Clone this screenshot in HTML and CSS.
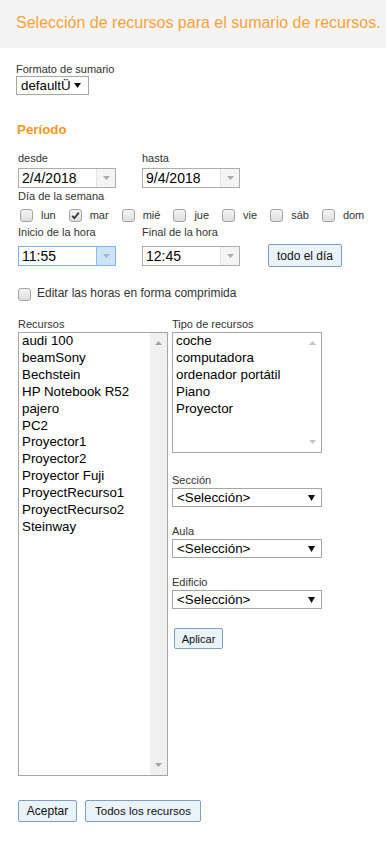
FILE: index.html
```html
<!DOCTYPE html>
<html lang="es">
<head>
<meta charset="utf-8">
<title>Selección de recursos</title>
<link rel="stylesheet" href="styles.css">
</head>
<body>
<header class="hdr">
  <h1 class="hdr-title">Selección de recursos para el sumario de recursos.</h1>
</header>
<main class="page">
  <div class="fmt">
    <div class="lbl">Formato de sumario</div>
    <div class="select select-fmt"><span class="sel-text">defaultÜ</span><svg class="caret" width="7" height="5" viewBox="0 0 7 5"><polygon points="0,0 7,0 3.5,5" fill="#111"/></svg></div>
  </div>

  <h2 class="section">Período</h2>

  <div class="content">
    <div class="pair-grid dates">
      <div class="lbl">desde</div>
      <div class="lbl">hasta</div>
      <div></div>
      <div class="combo"><span class="combo-val">2/4/2018</span><span class="combo-btn"><svg width="7" height="4" viewBox="0 0 7 4"><polygon points="0,0 7,0 3.5,4" fill="#a5adbd"/></svg></span></div>
      <div class="combo"><span class="combo-val">9/4/2018</span><span class="combo-btn"><svg width="7" height="4" viewBox="0 0 7 4"><polygon points="0,0 7,0 3.5,4" fill="#a5adbd"/></svg></span></div>
      <div></div>
    </div>

    <div class="lbl days-lbl">Día de la semana</div>
    <div class="days">
      <div class="day"><span class="cb"></span><span class="day-name">lun</span></div>
      <div class="day"><span class="cb"><svg width="11" height="11" viewBox="0 0 11 11"><path d="M2.2 5.8 L4.4 8.2 L8.8 2.6" fill="none" stroke="#333" stroke-width="1.8"/></svg></span><span class="day-name">mar</span></div>
      <div class="day"><span class="cb"></span><span class="day-name">mié</span></div>
      <div class="day"><span class="cb"></span><span class="day-name">jue</span></div>
      <div class="day"><span class="cb"></span><span class="day-name">vie</span></div>
      <div class="day"><span class="cb"></span><span class="day-name">sáb</span></div>
      <div class="day"><span class="cb"></span><span class="day-name">dom</span></div>
    </div>

    <div class="pair-grid times">
      <div class="lbl">Inicio de la hora</div>
      <div class="lbl">Final de la hora</div>
      <div></div>
      <div class="combo combo-active"><span class="combo-val">11:55</span><span class="combo-btn"><svg width="7" height="4" viewBox="0 0 7 4"><polygon points="0,0 7,0 3.5,4" fill="#a5b6c8"/></svg></span></div>
      <div class="combo"><span class="combo-val">12:45</span><span class="combo-btn"><svg width="7" height="4" viewBox="0 0 7 4"><polygon points="0,0 7,0 3.5,4" fill="#a5adbd"/></svg></span></div>
      <button class="btn btn-day" type="button">todo el día</button>
    </div>

    <div class="compact">
      <span class="cb"></span>
      <span class="compact-text">Editar las horas en forma comprimida</span>
    </div>

    <div class="lists">
      <div class="col">
        <div class="lbl">Recursos</div>
        <div class="listbox listbox-main">
          <div class="opts">
            <div class="opt">audi 100</div>
            <div class="opt">beamSony</div>
            <div class="opt">Bechstein</div>
            <div class="opt">HP Notebook R52</div>
            <div class="opt">pajero</div>
            <div class="opt">PC2</div>
            <div class="opt">Proyector1</div>
            <div class="opt">Proyector2</div>
            <div class="opt">Proyector Fuji</div>
            <div class="opt">ProyectRecurso1</div>
            <div class="opt">ProyectRecurso2</div>
            <div class="opt">Steinway</div>
          </div>
          <div class="sbar sbar-track">
            <svg width="7" height="4" viewBox="0 0 7 4"><polygon points="3.5,0 7,4 0,4" fill="#a3a3a3"/></svg>
            <svg width="7" height="4" viewBox="0 0 7 4"><polygon points="0,0 7,0 3.5,4" fill="#a3a3a3"/></svg>
          </div>
        </div>
      </div>
      <div class="col">
        <div class="lbl">Tipo de recursos</div>
        <div class="listbox listbox-type">
          <div class="opts">
            <div class="opt">coche</div>
            <div class="opt">computadora</div>
            <div class="opt">ordenador portátil</div>
            <div class="opt">Piano</div>
            <div class="opt">Proyector</div>
          </div>
          <div class="sbar">
            <svg width="7" height="4" viewBox="0 0 7 4"><polygon points="3.5,0 7,4 0,4" fill="#c4c4c4"/></svg>
            <svg width="7" height="4" viewBox="0 0 7 4"><polygon points="0,0 7,0 3.5,4" fill="#c4c4c4"/></svg>
          </div>
        </div>

        <div class="filter filter-first">
          <div class="lbl">Sección</div>
          <div class="select select-wide"><span class="sel-text">&lt;Selección&gt;</span><svg class="caret" width="7" height="6" viewBox="0 0 7 6"><polygon points="0,0 7,0 3.5,6" fill="#111"/></svg></div>
        </div>
        <div class="filter">
          <div class="lbl">Aula</div>
          <div class="select select-wide"><span class="sel-text">&lt;Selección&gt;</span><svg class="caret" width="7" height="6" viewBox="0 0 7 6"><polygon points="0,0 7,0 3.5,6" fill="#111"/></svg></div>
        </div>
        <div class="filter">
          <div class="lbl">Edificio</div>
          <div class="select select-wide"><span class="sel-text">&lt;Selección&gt;</span><svg class="caret" width="7" height="6" viewBox="0 0 7 6"><polygon points="0,0 7,0 3.5,6" fill="#111"/></svg></div>
        </div>
        <button class="btn btn-apply" type="button">Aplicar</button>
      </div>
    </div>

    <div class="actions">
      <button class="btn btn-ok" type="button">Aceptar</button>
      <button class="btn btn-all" type="button">Todos los recursos</button>
    </div>
  </div>
</main>
</body>
</html>
```

FILE: styles.css
```css
html, body {
  margin: 0;
  padding: 0;
  background: #fff;
}

body {
  font-family: "Liberation Sans", Arial, sans-serif;
  color: #222;
}

.hdr {
  background: #f4f4f4;
  height: 48px;
  box-sizing: border-box;
  padding: 14px 0 0 16px;
}

.hdr-title {
  margin: 0;
  font-size: 16px;
  line-height: 18px;
  font-weight: normal;
  color: #f8a23a;
  white-space: nowrap;
}

.page {
  padding: 0 0 40px 16px;
}

.lbl {
  font-size: 11px;
  line-height: 13px;
  color: #333;
  white-space: nowrap;
}

.fmt {
  margin-top: 15px;
}

.select {
  display: flex;
  align-items: center;
  box-sizing: border-box;
  height: 19px;
  border: 1px solid #a6a6a6;
  background: #fff;
  font-size: 13.33px;
  color: #000;
}

.select-fmt {
  width: 73px;
  padding: 0 7px 0 4px;
}

.select-wide {
  width: 150px;
  padding: 0 6px 0 4px;
}

.sel-text {
  flex: 1;
  white-space: nowrap;
}

.caret {
  display: block;
  flex: none;
}

.section {
  margin: 27px 0 0 1px;
  font-size: 13.33px;
  line-height: 16px;
  font-weight: bold;
  color: #f7961f;
}

.content {
  padding-left: 2px;
}

.pair-grid {
  display: grid;
  grid-template-columns: 98px 98px auto;
  column-gap: 26px;
  align-items: center;
}

.dates {
  margin-top: 14px;
  row-gap: 3px;
}

.times {
  margin-top: 2px;
  row-gap: 5px;
}

.combo {
  display: flex;
  box-sizing: border-box;
  height: 20px;
  border: 1px solid #abadb3;
  background: #fff;
}

.combo-val {
  flex: 1;
  padding-left: 3px;
  font-size: 14px;
  line-height: 18px;
  color: #000;
}

.combo-btn {
  flex: none;
  width: 18px;
  display: flex;
  align-items: center;
  justify-content: center;
  background: #f4f4f4;
  border-left: 1px solid #e3e3e3;
}

.combo-active {
  border-color: #7eb4ea;
}

.combo-active .combo-btn {
  background: #cce4f7;
  border-left-color: #8cbcec;
}

.days-lbl {
  margin-top: 2px;
}

.days {
  display: flex;
  align-items: center;
  height: 17px;
  margin-top: 4px;
  padding-left: 2px;
  column-gap: 13px;
}

.day {
  display: flex;
  align-items: center;
  column-gap: 8px;
}

.day-name {
  font-size: 11px;
  line-height: 13px;
  color: #333;
}

.cb {
  flex: none;
  box-sizing: border-box;
  width: 13px;
  height: 13px;
  border: 1px solid #a3a3a3;
  border-radius: 3px;
  background: linear-gradient(#f4f4f4, #dedede);
  display: flex;
  align-items: center;
  justify-content: center;
}

.btn {
  font-family: "Liberation Sans", Arial, sans-serif;
  box-sizing: border-box;
  margin: 0;
  border: 1px solid #7f9fc2;
  border-radius: 2px;
  background: #eaf2fa;
  color: #111;
  cursor: pointer;
  white-space: nowrap;
}

.btn-day {
  justify-self: start;
  margin-left: 2px;
  width: 74px;
  height: 23px;
  padding: 0;
  font-size: 12px;
}

.compact {
  display: flex;
  align-items: flex-start;
  column-gap: 6px;
  margin-top: 19px;
  height: 14px;
}

.compact .cb {
  margin-top: 2px;
}

.compact-text {
  font-size: 12px;
  line-height: 14px;
  color: #333;
}

.lists {
  display: grid;
  grid-template-columns: 150px 150px;
  column-gap: 4px;
  align-items: start;
  margin-top: 18px;
}

.col > .lbl {
  margin-bottom: 1px;
}

.listbox {
  display: flex;
  box-sizing: border-box;
  border: 1px solid #a6a6a6;
  background: #fff;
}

.listbox-main {
  height: 444px;
}

.listbox-type {
  height: 121px;
}

.opts {
  flex: 1;
  min-width: 0;
  overflow: hidden;
}

.opt {
  padding-left: 3px;
  font-size: 13.33px;
  line-height: 16.9px;
  color: #000;
  white-space: nowrap;
}

.sbar {
  flex: none;
  width: 17px;
  display: flex;
  flex-direction: column;
  justify-content: space-between;
  align-items: center;
  padding: 8px 0 8px;
  box-sizing: border-box;
}

.sbar-track {
  background: #f0f0f0;
}

.filter {
  margin-top: 18px;
}

.filter-first {
  margin-top: 21px;
}

.filter .lbl {
  margin-bottom: 1px;
}

.btn-apply {
  display: block;
  margin: 19px 0 0 2px;
  width: 49px;
  height: 21px;
  padding: 0;
  font-size: 11px;
}

.actions {
  display: flex;
  column-gap: 8px;
  margin-top: 24px;
}

.btn-ok {
  width: 59px;
  height: 22px;
  padding: 0;
  font-size: 12px;
}

.btn-all {
  width: 116px;
  height: 22px;
  padding: 0;
  font-size: 11.5px;
}
```
